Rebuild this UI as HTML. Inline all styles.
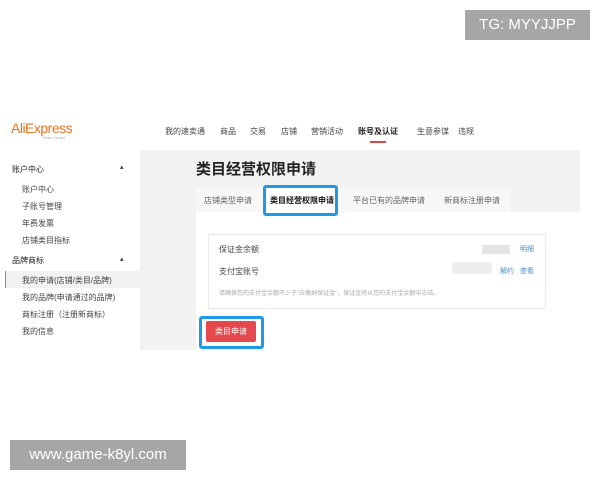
<!DOCTYPE html>
<html><head><meta charset="utf-8"><style>
*{margin:0;padding:0;box-sizing:border-box}
body{width:600px;height:480px;background:#fff;position:relative;overflow:hidden;font-family:"Liberation Sans","Noto Sans CJK SC",sans-serif;color:#333}
.a{position:absolute;white-space:nowrap}
.s{font-size:8px;color:#444}
</style></head><body>
<div class="a" style="left:465px;top:10px;width:125px;height:30px;background:#a6a6a6;color:#fff;font-size:15px;line-height:30px;text-align:center">TG: MYYJJPP</div>
<div class="a" style="left:10px;top:440px;width:176px;height:30px;background:#a6a6a6;color:#fff;font-size:15px;line-height:30px;text-align:center">www.game-k8yl.com</div>

<div class="a" style="left:11px;top:120px;font-size:14px;color:#e8731e;letter-spacing:-0.5px">AliExpress</div>
<div class="a" style="left:42px;top:135px;font-size:4px;color:#aaa">Seller Center</div>
<div class="a s" style="left:165px;top:126px">我的速卖通</div>
<div class="a s" style="left:220px;top:126px">商品</div>
<div class="a s" style="left:250px;top:126px">交易</div>
<div class="a s" style="left:281px;top:126px">店铺</div>
<div class="a s" style="left:311px;top:126px">营销活动</div>
<div class="a s" style="left:358px;top:126px;color:#222;font-weight:bold">账号及认证</div>
<div class="a" style="left:370px;top:141px;width:16px;height:2px;background:#e04848"></div>
<div class="a s" style="left:417px;top:126px">生意参谋</div>
<div class="a s" style="left:458px;top:126px">违规</div>

<div class="a" style="left:140px;top:150px;width:440px;height:200px;background:#f2f2f2"></div>
<div class="a" style="left:0;top:150px;width:140px;height:200px;background:#fff"></div>
<div class="a" style="left:12px;top:164px;font-size:8px;color:#222">账户中心</div>
<div class="a" style="left:120px;top:163px;font-size:7px">▴</div>
<div class="a s" style="left:22px;top:184px">账户中心</div>
<div class="a s" style="left:22px;top:201px">子账号管理</div>
<div class="a s" style="left:22px;top:218px">年费发票</div>
<div class="a s" style="left:22px;top:235px">店铺类目指标</div>
<div class="a" style="left:12px;top:255px;font-size:8px;color:#222">品牌商标</div>
<div class="a" style="left:120px;top:255px;font-size:7px">▴</div>
<div class="a" style="left:5px;top:271px;width:135px;height:17px;background:#f2f2f2;border-left:1px solid #d66"></div>
<div class="a s" style="left:22px;top:275px">我的申请(店铺/类目/品牌)</div>
<div class="a s" style="left:22px;top:292px">我的品牌(申请通过的品牌)</div>
<div class="a s" style="left:22px;top:309px">商标注册（注册新商标）</div>
<div class="a s" style="left:22px;top:326px">我的信息</div>

<div class="a" style="left:196px;top:158px;font-size:15px;font-weight:bold;color:#222">类目经营权限申请</div>
<div class="a" style="left:196px;top:188px;width:314px;height:26px;background:#f7f7f7"></div>
<div class="a" style="left:196px;top:212px;width:384px;height:138px;background:#fff"></div>
<div class="a s" style="left:204px;top:195px;color:#666">店铺类型申请</div>
<div class="a" style="left:263px;top:185px;width:75px;height:31px;border:3px solid #1e9be6;border-radius:3px;background:#fff"></div>
<div class="a s" style="left:270px;top:195px;color:#111;font-weight:bold">类目经营权限申请</div>
<div class="a s" style="left:353px;top:195px;color:#666">平台已有的品牌申请</div>
<div class="a s" style="left:444px;top:195px;color:#666">新商标注册申请</div>

<div class="a" style="left:208px;top:234px;width:338px;height:75px;border:1px solid #eaeaea;background:#fff"></div>
<div class="a s" style="left:219px;top:244px">保证金余额</div>
<div class="a" style="left:482px;top:245px;width:28px;height:9px;background:#e4e4e4"></div>
<div class="a" style="left:520px;top:244px;font-size:7px;color:#4a8fd0">明细</div>
<div class="a s" style="left:219px;top:266px">支付宝账号</div>
<div class="a" style="left:452px;top:262px;width:40px;height:12px;background:#eee"></div>
<div class="a" style="left:500px;top:266px;font-size:7px;color:#4a8fd0">解约&nbsp;&nbsp; 查看</div>
<div class="a" style="left:219px;top:288px;font-size:6px;color:#aaa">请确保您的支付宝余额不少于"应缴纳保证金"，保证金将从您的支付宝余额中冻结。</div>

<div class="a" style="left:199px;top:316px;width:65px;height:33px;border:3px solid #1e9be6;border-radius:3px"></div>
<div class="a" style="left:206px;top:321px;width:50px;height:21px;background:#e5484d;border-radius:2px;color:#fff;font-size:8px;line-height:21px;text-align:center">类目申请</div>
</body></html>
